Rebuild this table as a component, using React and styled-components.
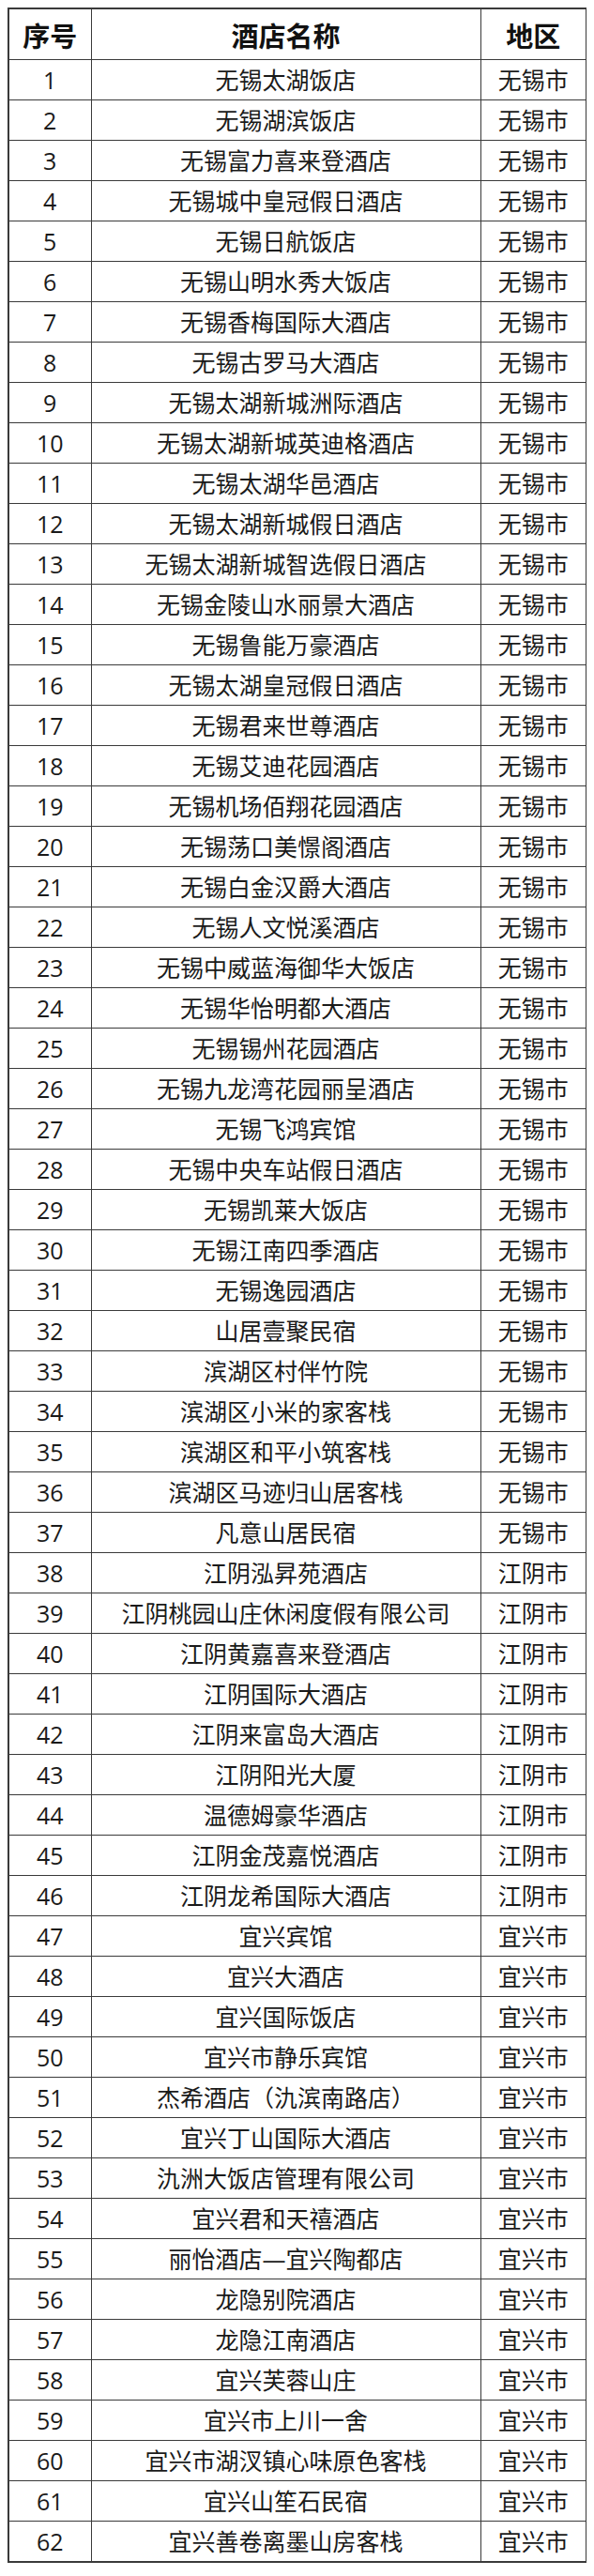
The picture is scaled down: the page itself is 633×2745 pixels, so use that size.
import React from 'react';
import styled, { createGlobalStyle } from 'styled-components';

const GlobalStyle = createGlobalStyle`
    body {
        margin: 8px;
        background: #ffffff;
        font-family: "Open Sans", "Noto Sans CJK SC", sans-serif;
        color: #1a1a1a;
    }
`;

const hotels = [
    ['无锡太湖饭店', '无锡市'],
    ['无锡湖滨饭店', '无锡市'],
    ['无锡富力喜来登酒店', '无锡市'],
    ['无锡城中皇冠假日酒店', '无锡市'],
    ['无锡日航饭店', '无锡市'],
    ['无锡山明水秀大饭店', '无锡市'],
    ['无锡香梅国际大酒店', '无锡市'],
    ['无锡古罗马大酒店', '无锡市'],
    ['无锡太湖新城洲际酒店', '无锡市'],
    ['无锡太湖新城英迪格酒店', '无锡市'],
    ['无锡太湖华邑酒店', '无锡市'],
    ['无锡太湖新城假日酒店', '无锡市'],
    ['无锡太湖新城智选假日酒店', '无锡市'],
    ['无锡金陵山水丽景大酒店', '无锡市'],
    ['无锡鲁能万豪酒店', '无锡市'],
    ['无锡太湖皇冠假日酒店', '无锡市'],
    ['无锡君来世尊酒店', '无锡市'],
    ['无锡艾迪花园酒店', '无锡市'],
    ['无锡机场佰翔花园酒店', '无锡市'],
    ['无锡荡口美憬阁酒店', '无锡市'],
    ['无锡白金汉爵大酒店', '无锡市'],
    ['无锡人文悦溪酒店', '无锡市'],
    ['无锡中威蓝海御华大饭店', '无锡市'],
    ['无锡华怡明都大酒店', '无锡市'],
    ['无锡锡州花园酒店', '无锡市'],
    ['无锡九龙湾花园丽呈酒店', '无锡市'],
    ['无锡飞鸿宾馆', '无锡市'],
    ['无锡中央车站假日酒店', '无锡市'],
    ['无锡凯莱大饭店', '无锡市'],
    ['无锡江南四季酒店', '无锡市'],
    ['无锡逸园酒店', '无锡市'],
    ['山居壹聚民宿', '无锡市'],
    ['滨湖区村伴竹院', '无锡市'],
    ['滨湖区小米的家客栈', '无锡市'],
    ['滨湖区和平小筑客栈', '无锡市'],
    ['滨湖区马迹归山居客栈', '无锡市'],
    ['凡意山居民宿', '无锡市'],
    ['江阴泓昇苑酒店', '江阴市'],
    ['江阴桃园山庄休闲度假有限公司', '江阴市'],
    ['江阴黄嘉喜来登酒店', '江阴市'],
    ['江阴国际大酒店', '江阴市'],
    ['江阴来富岛大酒店', '江阴市'],
    ['江阴阳光大厦', '江阴市'],
    ['温德姆豪华酒店', '江阴市'],
    ['江阴金茂嘉悦酒店', '江阴市'],
    ['江阴龙希国际大酒店', '江阴市'],
    ['宜兴宾馆', '宜兴市'],
    ['宜兴大酒店', '宜兴市'],
    ['宜兴国际饭店', '宜兴市'],
    ['宜兴市静乐宾馆', '宜兴市'],
    ['杰希酒店（氿滨南路店）', '宜兴市'],
    ['宜兴丁山国际大酒店', '宜兴市'],
    ['氿洲大饭店管理有限公司', '宜兴市'],
    ['宜兴君和天禧酒店', '宜兴市'],
    ['丽怡酒店—宜兴陶都店', '宜兴市'],
    ['龙隐别院酒店', '宜兴市'],
    ['龙隐江南酒店', '宜兴市'],
    ['宜兴芙蓉山庄', '宜兴市'],
    ['宜兴市上川一舍', '宜兴市'],
    ['宜兴市湖汊镇心味原色客栈', '宜兴市'],
    ['宜兴山笙石民宿', '宜兴市'],
    ['宜兴善卷离墨山房客栈', '宜兴市'],
];

const Table = styled.table`
    width: 616px;
    table-layout: fixed;
    border-collapse: collapse;
    border: 2px solid #3a3a3a;
`;

const HeadCell = styled.th`
    height: 53px;
    padding: 0;
    border: 1.5px solid #3a3a3a;
    font-size: 29px;
    font-weight: 700;
    text-align: center;
    color: #111;
`;

const Cell = styled.td`
    height: 42px;
    padding: 0;
    border: 1.5px solid #3a3a3a;
    font-size: 25px;
    line-height: 1;
    text-align: center;
    white-space: nowrap;
    color: #1a1a1a;
`;

const App = () => {
    return (
        <>
            <GlobalStyle />
            <Table>
                <colgroup>
                    <col style={{ width: 88 }} />
                    <col style={{ width: 415 }} />
                    <col style={{ width: 113 }} />
                </colgroup>
                <thead>
                    <tr>
                        <HeadCell>序号</HeadCell>
                        <HeadCell>酒店名称</HeadCell>
                        <HeadCell>地区</HeadCell>
                    </tr>
                </thead>
                <tbody>
                    {hotels.map(([name, area], i) => (
                        <tr key={i}>
                            <Cell>{i + 1}</Cell>
                            <Cell>{name}</Cell>
                            <Cell>{area}</Cell>
                        </tr>
                    ))}
                </tbody>
            </Table>
        </>
    );
};

export default App;
